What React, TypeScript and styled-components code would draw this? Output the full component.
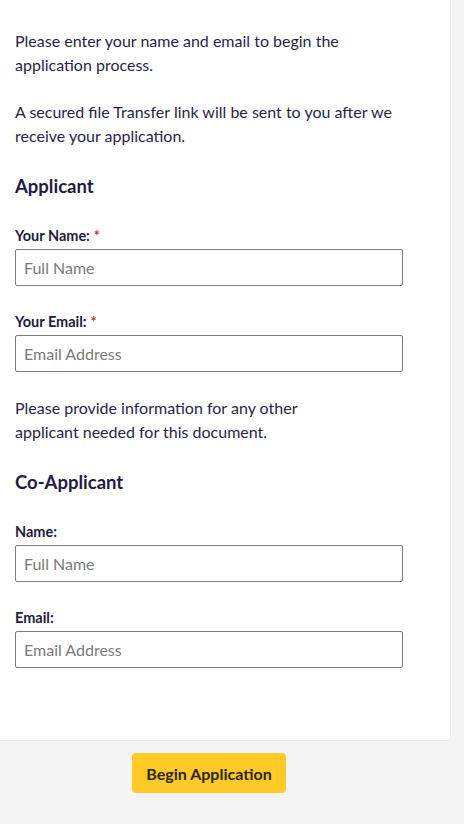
import styled, { createGlobalStyle } from 'styled-components'

const GlobalStyle = createGlobalStyle`
  html, body {
    margin: 0;
    padding: 0;
    background: #f4f4f4;
    font-family: Lato, 'Open Sans', sans-serif;
    color: #2a1f45;
  }
`

const Page = styled.div`
  width: 464px;
  min-height: 824px;
  background: #f4f4f4;
`

const Card = styled.div`
  width: 451px;
  background: #ffffff;
  border-right: 1px solid #ebebeb;
  border-bottom: 1px solid #ebebeb;
  border-bottom-right-radius: 4px;
  padding: 29px 0 72px 15px;
  box-sizing: border-box;
`

const Intro = styled.p<{ $gap: number; $top?: number; $width: number }>`
  margin: ${(p) => p.$top ?? 0}px 0 ${(p) => p.$gap}px;
  font-size: 16px;
  line-height: 24px;
  color: #2a1f45;
  max-width: ${(p) => p.$width}px;
`

const Heading = styled.h2`
  margin: 26px 0 0;
  font-size: 18.5px;
  line-height: 24px;
  font-weight: 700;
  color: #241a40;
`

const Field = styled.div<{ $top: number }>`
  display: flex;
  flex-direction: column;
  gap: 3px;
  margin-top: ${(p) => p.$top}px;
  width: 388px;
`

const Label = styled.label`
  font-size: 14.5px;
  line-height: 20px;
  font-weight: 700;
  color: #241a40;
`

const Required = styled.span`
  color: #c0392b;
  margin-left: 4px;
`

const Input = styled.input`
  box-sizing: border-box;
  height: 37px;
  width: 100%;
  border: 1px solid #7d7d7d;
  border-radius: 2px;
  padding: 0 8px;
  font-family: Lato, 'Open Sans', sans-serif;
  font-size: 16px;
  color: #2a1f45;
  outline: none;
  &::placeholder {
    color: #7a7a7a;
  }
`

const Footer = styled.div`
  width: 388px;
  margin-left: 15px;
  padding-top: 12px;
  display: flex;
  justify-content: center;
`

const Button = styled.button`
  height: 40px;
  padding: 0 14px;
  border: none;
  border-radius: 4px;
  background: #ffc926;
  font-family: Lato, 'Open Sans', sans-serif;
  font-size: 16px;
  font-weight: 700;
  color: #2d2716;
  cursor: pointer;
`

export default function App() {
  return (
    <Page>
      <GlobalStyle />
      <Card>
        <Intro $gap={23} $width={390}>
          Please enter your name and email to begin the application process.
        </Intro>
        <Intro $gap={2} $width={400}>
          A secured file Transfer link will be sent to you after we receive your application.
        </Intro>

        <Heading>Applicant</Heading>
        <Field $top={28}>
          <Label>
            Your Name:<Required>*</Required>
          </Label>
          <Input placeholder="Full Name" />
        </Field>
        <Field $top={26}>
          <Label>
            Your Email:<Required>*</Required>
          </Label>
          <Input placeholder="Email Address" />
        </Field>

        <Intro $gap={0} $top={24} $width={300}>
          Please provide information for any other applicant needed for this document.
        </Intro>

        <Heading>Co-Applicant</Heading>
        <Field $top={28}>
          <Label>Name:</Label>
          <Input placeholder="Full Name" />
        </Field>
        <Field $top={26}>
          <Label>Email:</Label>
          <Input placeholder="Email Address" />
        </Field>
      </Card>
      <Footer>
        <Button>Begin Application</Button>
      </Footer>
    </Page>
  )
}
